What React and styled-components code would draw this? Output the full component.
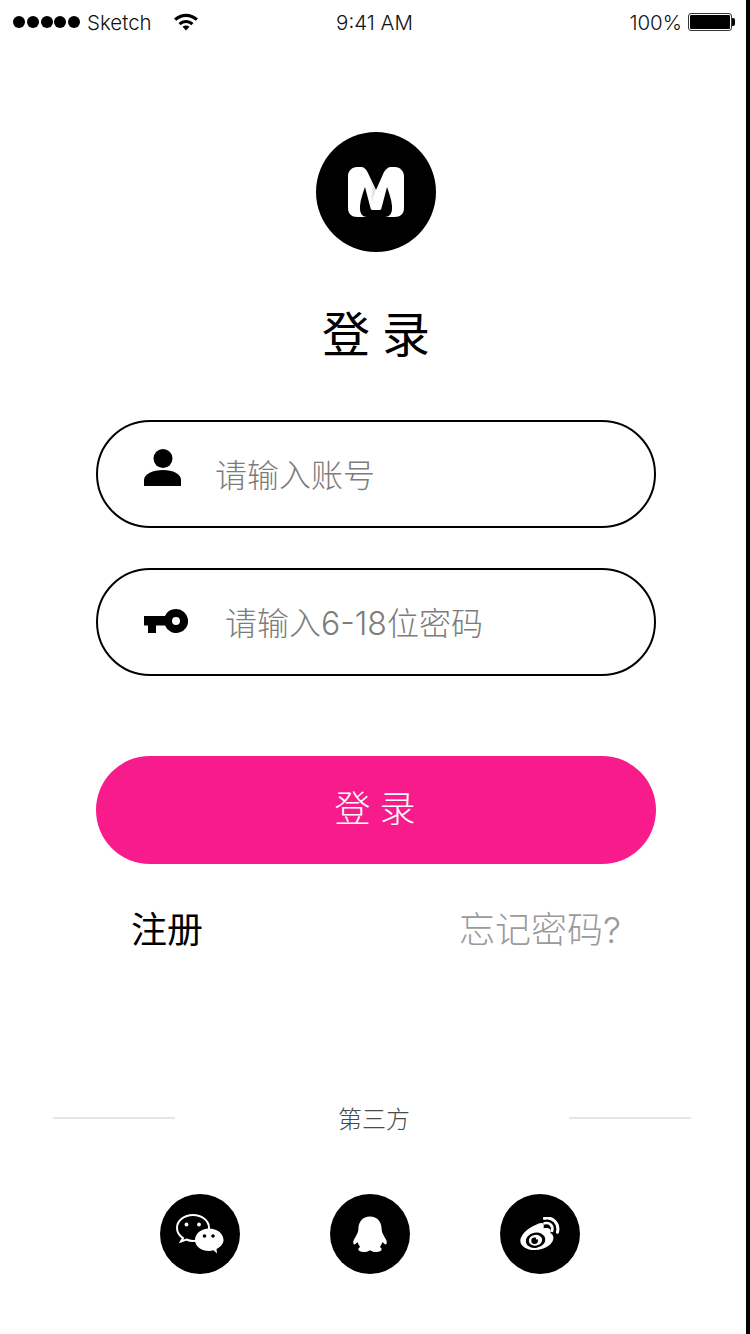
import React from "react";
import styled, { createGlobalStyle } from "styled-components";

const GlobalStyle = createGlobalStyle`
  html, body {
    margin: 0;
    padding: 0;
    background: #fff;
  }
  * {
    box-sizing: border-box;
  }
`;

const Page = styled.div`
  width: 750px;
  height: 1334px;
  overflow: hidden;
  border-right: 4px solid #000;
  background: #fff;
  color: #000;
  font-family: Inter, "Noto Sans CJK SC", "Liberation Sans", sans-serif;
  font-weight: 300;
  display: flex;
  flex-direction: column;
`;

const StatusBar = styled.div`
  height: 46px;
  display: grid;
  grid-template-columns: 1fr auto 1fr;
  align-items: center;
  padding: 0 10px 2px 13px;
  font-size: 20.5px;
  color: #111;
`;

const StatusLeft = styled.div`
  display: flex;
  align-items: center;
`;

const Signal = styled.div`
  display: flex;
  gap: 1.75px;
  margin-right: 7px;
`;

const Dot = styled.span`
  width: 12px;
  height: 12px;
  border-radius: 50%;
  background: #000;
`;

const Wifi = styled.svg`
  margin-left: 21px;
  width: 26px;
  height: 20px;
  margin-top: -2px;
`;

const StatusRight = styled.div`
  display: flex;
  align-items: center;
  justify-content: flex-end;
  gap: 6px;
`;

const Battery = styled.div`
  position: relative;
  width: 44px;
  height: 18px;
  border: 1px solid #333;
  border-radius: 3px;
  padding: 1px;
  margin-right: 4px;
  &::before {
    content: "";
    display: block;
    height: 100%;
    background: #000;
    border-radius: 1px;
  }
  &::after {
    content: "";
    position: absolute;
    right: -4px;
    top: 4px;
    width: 3px;
    height: 8px;
    background: #000;
    border-radius: 0 2px 2px 0;
  }
`;

const Main = styled.div`
  width: 560px;
  margin-left: 96px;
  display: flex;
  flex-direction: column;
  align-items: center;
`;

const Logo = styled.div`
  margin-top: 86px;
  width: 120px;
  height: 120px;
  border-radius: 50%;
  background: #000;
  display: flex;
  align-items: center;
  justify-content: center;
`;

const Title = styled.h1`
  margin: 51px 0 0;
  height: 64px;
  line-height: 64px;
  font-size: 48px;
  font-weight: 400;
  letter-spacing: 12px;
  padding-left: 12px;
  white-space: nowrap;
`;

const Field = styled.div`
  width: 100%;
  height: 108px;
  margin-top: ${(p) => p.$top}px;
  border: 2px solid #000;
  border-radius: 54px;
  display: flex;
  align-items: center;
  padding-left: 46px;
`;

const FieldIcon = styled.svg`
  flex: none;
  width: ${(p) => p.$w}px;
  height: ${(p) => p.$h}px;
  margin-right: ${(p) => p.$gap}px;
  margin-bottom: ${(p) => p.$lift}px;
`;

const FieldText = styled.span`
  font-size: 32px;
  line-height: 44px;
  color: #7c7c7c;
  white-space: nowrap;
  padding-top: 4px;
`;

const SubmitButton = styled.div`
  width: 100%;
  height: 108px;
  margin-top: 80px;
  border-radius: 54px;
  background: #f81b8b;
  color: #fff;
  font-size: 36px;
  letter-spacing: 9px;
  padding: 0 0 8px 7px;
  display: flex;
  align-items: center;
  justify-content: center;
`;

const LinkRow = styled.div`
  width: 100%;
  margin-top: 40px;
  padding: 0 35px;
  display: flex;
  justify-content: space-between;
  font-size: 36px;
  line-height: 52px;
`;

const RowLink = styled.span`
  color: ${(p) => p.$color};
  font-weight: ${(p) => p.$weight};
  white-space: nowrap;
`;

const Divider = styled.div`
  margin: 148px 55px 0 53px;
  height: 32px;
  display: flex;
  align-items: center;
  justify-content: space-between;
`;

const Rule = styled.span`
  width: 122px;
  height: 2px;
  background: #e6e6e6;
  margin-top: -4px;
`;

const DividerText = styled.span`
  font-size: 24px;
  line-height: 32px;
  color: #4a4a4a;
  margin-left: 4px;
`;

const SocialRow = styled.div`
  margin: 58px 0 0 160px;
  display: flex;
  gap: 90px;
`;

const SocialIcon = styled.div`
  width: 80px;
  height: 80px;
  border-radius: 50%;
  background: #000;
  display: flex;
  align-items: center;
  justify-content: center;
`;

function WifiIcon() {
  return (
    <Wifi viewBox="0 0 26 20">
      <path d="M1 7.500C8 1 18 1 25 7.500L22.800 9.800C17 4.600 9 4.600 3.200 9.800Z" fill="#000" />
      <path d="M5.500 12C10 8 16 8 20.500 12L18.300 14.200C15 11.400 11 11.400 7.700 14.200Z" fill="#000" />
      <path d="M9.500 15.800C11.600 14.200 14.400 14.200 16.500 15.800L13 19.500Z" fill="#000" />
    </Wifi>
  );
}

function LogoMark() {
  return (
    <svg width="56" height="50" viewBox="0 0 56 50">
      <defs>
        <linearGradient id="logoShade" x1="0" y1="0" x2="1" y2="0">
          <stop offset="0" stopColor="#fff" />
          <stop offset="1" stopColor="#d6d6d6" />
        </linearGradient>
      </defs>
      <path
        d="M9 0H13C16 0 18 2 19.500 5L28 23L36 5C38 2 40 0 43 0H47C52 0 56 4 56 9V41C56 47 52 50 47 50H9C4 50 0 47 0 41V9C0 4 4 0 9 0Z"
        fill="#fff"
      />
      <path
        d="M17 20C15 26 12.500 32 12 39C11.500 46 14 50 19 50H37C42 50 44.500 46 44 39C43.500 32 41 26 39 20L33.500 41C33 43 32.500 43 31 43H25C23.500 43 23 43 22.500 41Z"
        fill="#000"
      />
      <path d="M22 12L27.500 23L24 37L22 26Z" fill="url(#logoShade)" />
    </svg>
  );
}

function WechatIcon() {
  return (
    <svg width="48" height="40" viewBox="0 0 48 40">
      <path
        d="M17 1C8 1 1 6.800 1 14C1 18 3.200 21.500 7 24L5 27.500L10.500 25.500C12.500 26.500 15 27 17 27C26 27 33 21.200 33 14C33 6.800 26 1 17 1Z"
        fill="none"
        stroke="#fff"
        strokeWidth="2"
      />
      <circle cx="10.500" cy="10.500" r="1.900" fill="#fff" />
      <circle cx="23" cy="10.500" r="1.900" fill="#fff" />
      <path
        d="M33 14.500C25.500 14.500 19 19.500 19 26C19 32.500 25.500 37 33 37C34.500 37 36 36.800 37.500 36.300L41 39.500L40.500 35C44.500 33 47.500 30 47.500 26C47.500 19.500 41 14.500 33 14.500Z"
        fill="#fff"
      />
      <circle cx="28.500" cy="22" r="1.800" fill="#000" />
      <circle cx="37" cy="22" r="1.800" fill="#000" />
    </svg>
  );
}

function QqIcon() {
  return (
    <svg width="34" height="37" viewBox="0 0 38 40">
      <path
        d="M19 0C11 0 6 6 6 14C6 18 3 22 1 26C0 28 0 30 1 31C2 31.500 4 30 5 28.500C6 31 7 33 8 34C6 35 5.500 36.500 6.500 38C8 40 15 40.500 19 37.500C23 40.500 30 40 31.500 38C32.500 36.500 32 35 30 34C31 33 32 31 33 28.500C34 30 36 31.500 37 31C38 30 38 28 37 26C35 22 32 18 32 14C32 6 27 0 19 0Z"
        fill="#fff"
      />
    </svg>
  );
}

function WeiboIcon() {
  return (
    <svg width="42" height="34" viewBox="0 0 44 38">
      <path
        d="M17 9C21 6.500 25 6 26 8C26.700 9.500 26 11.500 26 12.500C28 12 32 11.800 33.500 14C34.500 15.500 34 17 33.500 18C35.500 19 37 20.500 37 23.500C37 30 27.500 37 16 37C7 37 0 32.500 0 26.500C0 21 7 13 17 9Z"
        fill="#fff"
      />
      <ellipse cx="17" cy="26" rx="11" ry="8.500" fill="#000" transform="rotate(-10 17 26)" />
      <ellipse cx="17" cy="26" rx="7.500" ry="6" fill="#fff" transform="rotate(-10 17 26)" />
      <circle cx="16" cy="26.500" r="3.700" fill="#000" />
      <circle cx="18.500" cy="24" r="1.100" fill="#fff" />
      <path d="M27 7C33 5.500 37 10 35.500 15.500" fill="none" stroke="#fff" strokeWidth="3" strokeLinecap="round" />
      <path d="M27 1.500C36 -0.500 44 7 41.500 17" fill="none" stroke="#fff" strokeWidth="3.400" strokeLinecap="round" />
    </svg>
  );
}

export default function App() {
  return (
    <Page>
      <GlobalStyle />
      <StatusBar>
        <StatusLeft>
          <Signal>
            {[0, 1, 2, 3, 4].map((i) => (
              <Dot key={i} />
            ))}
          </Signal>
          Sketch
          <WifiIcon />
        </StatusLeft>
        <span>9:41 AM</span>
        <StatusRight>
          100%
          <Battery />
        </StatusRight>
      </StatusBar>
      <Main>
        <Logo>
          <LogoMark />
        </Logo>
        <Title>登录</Title>
        <Field $top={53}>
          <FieldIcon $w={38} $h={38} $gap={33} $lift={12} viewBox="0 0 38 38">
            <circle cx="19" cy="9.500" r="9.500" fill="#000" />
            <path d="M0 37V31C0 25 9 21 19 21C29 21 37 25 37 31V37Z" fill="#000" />
          </FieldIcon>
          <FieldText>请输入账号</FieldText>
        </Field>
        <Field $top={40}>
          <FieldIcon $w={44} $h={24} $gap={37} $lift={2} viewBox="0 0 44 24">
            <path
              fillRule="evenodd"
              d="M32 0A12 12 0 1 1 21 16.500H12V24H4V16.500H0V7H21A12 12 0 0 1 32 0ZM32 8A4 4 0 1 0 32 16A4 4 0 0 0 32 8Z"
              fill="#000"
            />
          </FieldIcon>
          <FieldText>请输入6-18位密码</FieldText>
        </Field>
        <SubmitButton>登录</SubmitButton>
        <LinkRow>
          <RowLink $color="#000" $weight={400}>注册</RowLink>
          <RowLink $color="#9a9a9a" $weight={300}>忘记密码?</RowLink>
        </LinkRow>
      </Main>
      <Divider>
        <Rule />
        <DividerText>第三方</DividerText>
        <Rule />
      </Divider>
      <SocialRow>
        <SocialIcon>
          <WechatIcon />
        </SocialIcon>
        <SocialIcon>
          <QqIcon />
        </SocialIcon>
        <SocialIcon>
          <WeiboIcon />
        </SocialIcon>
      </SocialRow>
    </Page>
  );
}
